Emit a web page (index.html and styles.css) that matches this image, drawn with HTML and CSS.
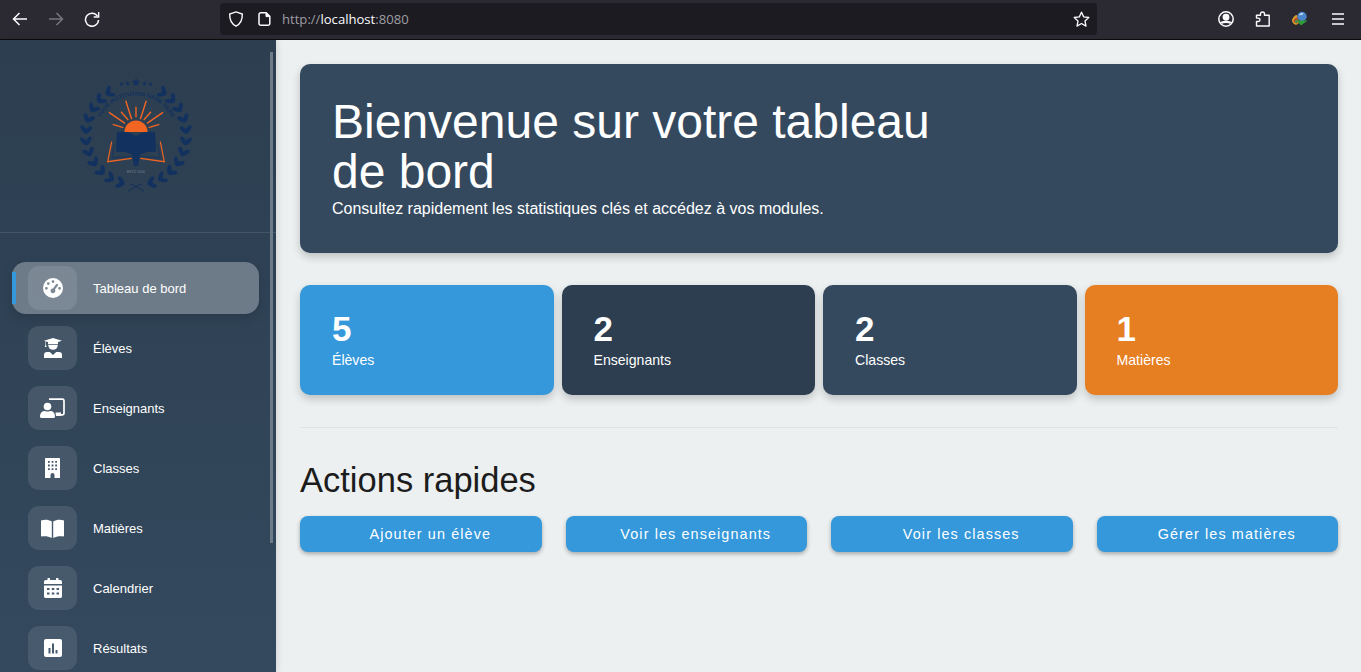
FILE: index.html
```html
<!DOCTYPE html>
<html lang="fr">

<head>
    <meta charset="UTF-8">
    <meta name="viewport" content="width=device-width, initial-scale=1.0">
    <title>Tableau de bord</title>
    <link rel="stylesheet" href="styles.css">
</head>

<body>
    <!-- barre du navigateur -->
    <div class="toolbar">
        <span class="tool">
            <svg width="16" height="16" viewBox="0 0 16 16" fill="none" stroke="currentColor" stroke-width="1.5"><path d="M15 8H1.5M7.500 2l-6 6 6 6"/></svg>
        </span>
        <span class="tool tool-off">
            <svg width="16" height="16" viewBox="0 0 16 16" fill="none" stroke="currentColor" stroke-width="1.5"><path d="M1 8h13.500M8.500 2l6 6-6 6"/></svg>
        </span>
        <span class="tool">
            <svg width="16" height="16" viewBox="0 0 16 16" fill="none" stroke="currentColor" stroke-width="1.5"><path d="M13.500 5.200A6.500 6.500 0 1 0 14.500 9"/><path d="M14.700 1v5h-5" stroke-width="1.300"/></svg>
        </span>
        <div class="urlbar">
            <svg class="url-shield" width="16" height="16" viewBox="0 0 16 16" fill="none" stroke="currentColor" stroke-width="1.400"><path d="M8 .9l6.300 2.100c.2 5.500-1.600 9.800-6.300 12.100C3.300 12.800 1.500 8.500 1.700 3z"/></svg>
            <svg class="url-page" width="14" height="16" viewBox="0 0 14 16" fill="none" stroke="currentColor" stroke-width="1.500"><path d="M2.800 1.800h5.400l3.600 3.600v7a1.800 1.800 0 0 1-1.800 1.800H2.800A1.800 1.800 0 0 1 1 12.400V3.600a1.800 1.800 0 0 1 1.800-1.800z"/><path d="M8 2v3.600h3.600" fill="currentColor" stroke-width="1"/></svg>
            <span class="url-text">http://<b>localhost</b>:8080</span>
            <svg class="url-star" width="17" height="17" viewBox="0 0 17 17" fill="none" stroke="currentColor" stroke-width="1.300"><path d="M8.500 1.200l2.200 4.700 5.100.6-3.800 3.500 1 5.100-4.500-2.600L4 15.100l1-5.100-3.800-3.500 5.100-.6z" stroke-linejoin="round"/></svg>
        </div>
        <span class="tool-right">
            <svg width="16" height="16" viewBox="0 0 16 16" fill="none" stroke="currentColor" stroke-width="1.500"><circle cx="8" cy="8" r="7.200"/><circle cx="8" cy="6.300" r="2.700" fill="currentColor"/><path d="M3.300 12.200c1-1.800 8.400-1.800 9.400 0" stroke-width="2.400"/></svg>
        </span>
        <span class="tool-right">
            <svg width="16" height="16" viewBox="0 0 16 16" fill="none" stroke="currentColor" stroke-width="1.400"><path d="M1.500 15V10.500h1.800a1.700 1.700 0 0 0 0-3.400H1.500V4.300h4V3a2 2 0 0 1 4 0v1.300h4.700V15z" stroke-linejoin="round"/></svg>
        </span>
        <span class="tool-right">
            <svg width="17" height="16" viewBox="0 0 17 16">
                <path d="M1 9c1-3 3-5 5-5l2 8-3 2C3 13 1 12 1 9z" fill="#d9a326"/>
                <path d="M2.500 9.500c1-2 2-3 4-3.500l1 5-2 1.500c-1.500-.3-3-1.500-3-3z" fill="#c8452f"/>
                <path d="M3.800 10c.6-1 1.400-1.500 2.400-1.800l.6 3-1.300 1c-1-.3-1.700-1.200-1.700-2.200z" fill="#3a9a48"/>
                <circle cx="11" cy="5.500" r="4.700" fill="#4a86c8"/>
                <path d="M8 4c1-2 3-2.500 4.500-1.500-.5 1.500-2 2-4.500 1.500z" fill="#b5d2ee"/>
                <path d="M6 9.500h10.500L10 14.500z" fill="#2e9e3a"/>
            </svg>
        </span>
        <span class="tool-right tool-menu">
            <svg width="14" height="14" viewBox="0 0 14 14" stroke="currentColor" stroke-width="1.400"><path d="M1 2h12M1 7h12M1 12h12"/></svg>
        </span>
    </div>

    <div class="app">
        <aside class="sidebar">
            <div class="sidebar-head">
                <svg class="logo" width="120" height="120" viewBox="0 0 120 120">
                    <defs>
                        <g id="leaf" fill="#12315f">
                            <ellipse cx="60" cy="7.500" rx="2.100" ry="4.800" transform="rotate(50 60 7.500)"/>
                            <ellipse cx="60" cy="12" rx="2.100" ry="4.800" transform="rotate(-50 60 12)"/>
                        </g>
                        <path id="arc" d="M20.500 60a39.500 39.500 0 0 1 79 0"/>
                    </defs>
                    <g>
                        <use href="#leaf" transform="rotate(-32 60 60)"/>
                        <use href="#leaf" transform="rotate(-45 60 60)"/>
                        <use href="#leaf" transform="rotate(-58 60 60)"/>
                        <use href="#leaf" transform="rotate(-71 60 60)"/>
                        <use href="#leaf" transform="rotate(-84 60 60)"/>
                        <use href="#leaf" transform="rotate(-97 60 60)"/>
                        <use href="#leaf" transform="rotate(-110 60 60)"/>
                        <use href="#leaf" transform="rotate(-123 60 60)"/>
                        <use href="#leaf" transform="rotate(-136 60 60)"/>
                        <use href="#leaf" transform="rotate(-149 60 60)"/>
                        <use href="#leaf" transform="rotate(-162 60 60)"/>
                        <use href="#leaf" transform="matrix(-1 0 0 1 120 0) rotate(-32 60 60)"/>
                        <use href="#leaf" transform="matrix(-1 0 0 1 120 0) rotate(-45 60 60)"/>
                        <use href="#leaf" transform="matrix(-1 0 0 1 120 0) rotate(-58 60 60)"/>
                        <use href="#leaf" transform="matrix(-1 0 0 1 120 0) rotate(-71 60 60)"/>
                        <use href="#leaf" transform="matrix(-1 0 0 1 120 0) rotate(-84 60 60)"/>
                        <use href="#leaf" transform="matrix(-1 0 0 1 120 0) rotate(-97 60 60)"/>
                        <use href="#leaf" transform="matrix(-1 0 0 1 120 0) rotate(-110 60 60)"/>
                        <use href="#leaf" transform="matrix(-1 0 0 1 120 0) rotate(-123 60 60)"/>
                        <use href="#leaf" transform="matrix(-1 0 0 1 120 0) rotate(-136 60 60)"/>
                        <use href="#leaf" transform="matrix(-1 0 0 1 120 0) rotate(-149 60 60)"/>
                        <use href="#leaf" transform="matrix(-1 0 0 1 120 0) rotate(-162 60 60)"/>
                    </g>
                    <path d="M16 44a46.500 46.500 0 0 0 88 0 46 43.500 0 0 1-88 0z" fill="#12315f"/>
                    <path d="M52 116c4-2 8-5 14-7M68 116c-4-2-8-5-14-7" fill="none" stroke="#12315f" stroke-width="1"/>
                    <g fill="#12315f">
                        <path d="M60 3l1.200 2.700 3 .3-2.200 2 .6 2.900L60 9.400l-2.600 1.500.6-2.900-2.200-2 3-.3z"/>
                        <path d="M51.500 6l.7 1.500 1.700.2-1.300 1.100.4 1.700-1.500-.9-1.500.9.400-1.700-1.300-1.100 1.700-.2zM68.500 6l.7 1.500 1.700.2-1.300 1.100.4 1.700-1.500-.9-1.500.9.400-1.700-1.300-1.100 1.700-.2z"/>
                        <path d="M45.500 7l.6 1.300 1.500.2-1.100 1 .3 1.400-1.300-.7-1.300.7.300-1.400-1.100-1 1.500-.2zM74.500 7l.6 1.300 1.500.2-1.100 1 .3 1.400-1.300-.7-1.300.7.300-1.400-1.100-1 1.500-.2z"/>
                    </g>
                    <text class="logo-text"><textPath href="#arc" startOffset="50%" text-anchor="middle">YOUR INSTITUTION NAME HERE</textPath></text>
                    <g stroke="#f26522" stroke-width="1.400">
                        <path d="M49.700 25.700l6 18.600M70.300 25.700l-6 18.600M60 31.700v10.600M45 36.700l7.300 8.300M75 36.700l-7.300 8.300M33 37.300l16 11M87 37.300l-16 11M36.700 49.300l10.600 3.400M83.300 49.300l-10.600 3.400"/>
                    </g>
                    <path d="M48.500 57a11.500 11.500 0 0 1 23 0z" fill="#f26522"/>
                    <path d="M35.700 66.700l-4 20 24-3.400M84.300 66.700l4 20-24-3.400" fill="none" stroke="#f26522" stroke-width="1.200"/>
                    <path d="M38 71l-2 12 20-2M82 71l2 12-20-2" fill="none" stroke="#12315f" stroke-width=".8"/>
                    <path d="M41 57c7-1 14 0 19 4 5-4 12-5 19-4l1 20c-7-1-14 0-20 5-6-5-13-6-20-5z" fill="#12315f"/>
                    <path d="M56 80h8l-1 6-1.200 5h-3.600L57 86z" fill="#12315f"/>
                    <text class="logo-date" x="60" y="98" text-anchor="middle">ESTD 2000</text>
                </svg>
            </div>
            <nav class="menu">
                <a class="menu-item active" href="#">
                    <span class="menu-icon">
                        <svg width="20" height="20" viewBox="0 0 20 20" fill="currentColor"><path fill-rule="evenodd" d="M10 0a10 10 0 1 1 0 20 10 10 0 0 1 0-20zm0 2.200a1.400 1.400 0 1 0 0 2.800 1.400 1.400 0 0 0 0-2.800zM5.300 4.200a1.400 1.400 0 1 0 0 2.800 1.400 1.400 0 0 0 0-2.800zm9.400 2a1.300 1.300 0 0 0-1.800.2l-2.900 4.100a2.300 2.300 0 1 0 1.900 1.100l2.900-3.900a1.300 1.300 0 0 0-.100-1.500zM3.400 8.900a1.400 1.400 0 1 0 0 2.800 1.400 1.400 0 0 0 0-2.800zm13.200 0a1.400 1.400 0 1 0 0 2.800 1.400 1.400 0 0 0 0-2.800z"/></svg>
                    </span>
                    Tableau de bord
                </a>
                <a class="menu-item" href="#">
                    <span class="menu-icon">
                        <svg width="18" height="20" viewBox="0 0 18 20" fill="currentColor"><path d="M9 0l9 2.700-4 1.300v2.200H4V4L2 3.400v3.200l.6 2.400H.8l.7-2.400V3.200L0 2.700z"/><path d="M4.200 7h9.600a4.800 4.800 0 0 1-9.600 0z"/><path d="M3 14h2.800L9 17l3.200-3H15a3 3 0 0 1 3 3v3H0v-3a3 3 0 0 1 3-3z"/></svg>
                    </span>
                    Élèves
                </a>
                <a class="menu-item" href="#">
                    <span class="menu-icon">
                        <svg width="25" height="20" viewBox="0 0 25 20" fill="currentColor"><circle cx="7.500" cy="8.500" r="3.800"/><path d="M0 18c0-3 2-5 4.500-5h.5c1.600.8 3.400.8 5 0h.5c2.500 0 4.500 2 4.500 5v.5c0 .8-.6 1.500-1.500 1.500h-12C.6 20 0 19.300 0 18.500z"/><path d="M9 1.200h13.500c1 0 1.500.5 1.500 1.500v12.600c0 1-.5 1.500-1.500 1.500H21" fill="none" stroke="currentColor" stroke-width="1.700"/><path d="M15.500 14.500h5.500V18h-5z"/></svg>
                    </span>
                    Enseignants
                </a>
                <a class="menu-item" href="#">
                    <span class="menu-icon">
                        <svg width="15" height="20" viewBox="0 0 15 20" fill="currentColor"><path fill-rule="evenodd" d="M.8 0h13.400c.4 0 .8.4.8.8V20H9.500v-3a2 2 0 0 0-4 0v3H0V.8C0 .4.400 0 .8 0zM3 3v1.800h1.800V3zm3.600 0v1.800h1.800V3zm3.600 0v1.800H12V3zM3 6.600v1.800h1.800V6.600zm3.600 0v1.800h1.800V6.600zm3.600 0v1.800H12V6.600zM3 10.200V12h1.800v-1.800zm3.600 0V12h1.800v-1.800zm3.600 0V12H12v-1.800z"/></svg>
                    </span>
                    Classes
                </a>
                <a class="menu-item" href="#">
                    <span class="menu-icon">
                        <svg width="23" height="19" viewBox="0 0 23 19" fill="currentColor"><path d="M0 1.500C3.500.3 7.500.5 10.800 2.500V19C7.500 17.300 3.500 17 .8 17.600c-.5 0-.8-.3-.8-.8z"/><path d="M23 1.500C19.500.3 15.500.5 12.200 2.500V19c3.300-1.700 7.300-2 10-1.400.5 0 .8-.3.8-.8z"/></svg>
                    </span>
                    Matières
                </a>
                <a class="menu-item" href="#">
                    <span class="menu-icon">
                        <svg width="18" height="20" viewBox="0 0 18 20" fill="currentColor"><path fill-rule="evenodd" d="M4 0h1.500c.3 0 .5.200.5.500V2h6V.5c0-.3.200-.5.500-.5H14c.3 0 .5.200.5.500V2h1.800C17.200 2 18 2.800 18 3.800V6H0V3.800C0 2.800.800 2 1.800 2h1.700V.5c0-.3.200-.5.500-.5zM0 7.500h18v10.700c0 1-.8 1.800-1.800 1.800H1.800C.8 20 0 19.200 0 18.200zM3 10v2h2.500v-2zm4.800 0v2h2.500v-2zm4.700 0v2H15v-2zM3 14.500v2h2.500v-2zm4.800 0v2h2.500v-2zm4.700 0v2H15v-2z"/></svg>
                    </span>
                    Calendrier
                </a>
                <a class="menu-item" href="#">
                    <span class="menu-icon">
                        <svg width="18" height="18" viewBox="0 0 18 18" fill="currentColor"><path fill-rule="evenodd" d="M2 0h14a2 2 0 0 1 2 2v14a2 2 0 0 1-2 2H2a2 2 0 0 1-2-2V2a2 2 0 0 1 2-2zm2.500 9v5.500h2V9zm3.500-4.500v10h2v-10zM11.500 11v3.500h2V11z"/></svg>
                    </span>
                    Résultats
                </a>
            </nav>
            <div class="sidebar-scroll"></div>
        </aside>

        <main class="content">
            <section class="banner">
                <h1>Bienvenue sur votre tableau de bord</h1>
                <p>Consultez rapidement les statistiques clés et accédez à vos modules.</p>
            </section>

            <section class="stats">
                <div class="stat stat-blue">
                    <strong>5</strong>
                    <span>Élèves</span>
                </div>
                <div class="stat stat-dark">
                    <strong>2</strong>
                    <span>Enseignants</span>
                </div>
                <div class="stat stat-slate">
                    <strong>2</strong>
                    <span>Classes</span>
                </div>
                <div class="stat stat-orange">
                    <strong>1</strong>
                    <span>Matières</span>
                </div>
            </section>

            <hr class="divider">

            <h2 class="section-title">Actions rapides</h2>
            <div class="actions">
                <a class="action" href="#">Ajouter un élève</a>
                <a class="action" href="#">Voir les enseignants</a>
                <a class="action" href="#">Voir les classes</a>
                <a class="action" href="#">Gérer les matières</a>
            </div>
        </main>
    </div>
</body>

</html>
```

FILE: styles.css
```css
* {
    box-sizing: border-box;
}

body {
    font-family: "Liberation Sans", Arial, sans-serif;
    background-color: #ecf0f1;
    margin: 0;
    height: 100vh;
    overflow: hidden;
    display: flex;
    flex-direction: column;
}

/* barre du navigateur */
.toolbar {
    height: 40px;
    flex-shrink: 0;
    display: flex;
    align-items: center;
    padding: 0 5px 1px 2px;
    background-color: #2b2a33;
    border-bottom: 1px solid #0c0c0d;
    color: #fbfbfe;
}

.tool {
    width: 36px;
    display: flex;
    justify-content: center;
}

.tool-off {
    color: #77767c;
}

.tool-right {
    width: 37px;
    display: flex;
    justify-content: center;
}

.tool-menu {
    width: 38px;
    padding-left: 1px;
}

.urlbar {
    flex: 1;
    height: 32px;
    margin: 0 110px;
    padding: 0 7px 0 8px;
    display: flex;
    align-items: center;
    background-color: #1c1b22;
    border-radius: 4px;
}

.url-page {
    margin-left: 14px;
}

.url-text {
    margin-left: 10px;
    font-family: "Open Sans", sans-serif;
    font-size: 13.100px;
    color: #9f9ea3;
}

.url-text b {
    font-weight: 400;
    color: #fbfbfe;
}

.url-star {
    margin-left: auto;
}

.app {
    flex: 1;
    min-height: 0;
    display: flex;
}

/* menu lateral */
.sidebar {
    position: relative;
    width: 276px;
    flex-shrink: 0;
    overflow: hidden;
    background: linear-gradient(180deg, #2c3e50, #34495e);
    box-shadow: 2px 0 6px rgba(0, 0, 0, 0.1);
    color: #ffffff;
}

.sidebar-head {
    height: 193px;
    display: flex;
    justify-content: center;
    padding: 35px 4px 0 0;
    border-bottom: 1px solid rgba(255, 255, 255, 0.1);
}

.logo {
    display: block;
}

.logo-text {
    font-size: 5.600px;
    font-weight: 700;
    fill: #12315f;
}

.logo-date {
    font-size: 3.500px;
    fill: #6f8096;
}

.menu {
    display: flex;
    flex-direction: column;
    gap: 8px;
    padding: 29px 17px 0 12px;
}

.menu-item {
    position: relative;
    flex-shrink: 0;
    height: 52px;
    display: flex;
    align-items: center;
    gap: 16px;
    padding-left: 16px;
    border-radius: 14px;
    color: #ffffff;
    text-decoration: none;
    font-size: 13px;
}

.menu-item.active {
    background-color: rgba(255, 255, 255, 0.3);
    box-shadow: 0 4px 12px rgba(0, 0, 0, 0.15);
}

.menu-item.active::before {
    content: "";
    position: absolute;
    left: 0;
    top: 10px;
    bottom: 10px;
    width: 4px;
    background-color: #3498db;
}

.menu-icon {
    width: 49px;
    height: 44px;
    display: flex;
    align-items: center;
    justify-content: center;
    border-radius: 11px;
    background-color: rgba(255, 255, 255, 0.1);
}

.sidebar-scroll {
    position: absolute;
    left: 270px;
    top: 12px;
    width: 3px;
    height: 491px;
    background-color: #6d7a87;
}

/* contenu */
.content {
    flex: 1;
    min-width: 0;
    padding: 24px 23px 24px 24px;
    color: #1c1c1c;
}

.banner {
    padding: 33px 32px 35px;
    border-radius: 10px;
    background-color: #34495e;
    box-shadow: 0 4px 8px rgba(0, 0, 0, 0.2);
    color: #ffffff;
}

.banner h1 {
    max-width: 640px;
    margin: 0;
    font-size: 48px;
    font-weight: 400;
    line-height: 50px;
}

.banner p {
    margin: 3px 0 0;
    font-size: 16px;
    line-height: 18px;
}

.stats {
    display: grid;
    grid-template-columns: repeat(4, 1fr);
    gap: 8px;
    margin-top: 32px;
}

.stat {
    height: 110px;
    padding: 24px 32px;
    display: flex;
    flex-direction: column;
    border-radius: 10px;
    box-shadow: 0 4px 8px rgba(0, 0, 0, 0.2);
    color: #ffffff;
}

.stat strong {
    font-size: 35px;
    line-height: 40px;
}

.stat span {
    font-size: 14.100px;
    line-height: 22px;
}

.stat-blue {
    background-color: #3498db;
}

.stat-dark {
    background-color: #2c3e50;
}

.stat-slate {
    background-color: #34495e;
}

.stat-orange {
    background-color: #e67e22;
}

.divider {
    margin: 32px 0 0;
    border: 0;
    border-top: 1px solid #dfe4e6;
}

.section-title {
    margin: 33px 0 17px;
    font-size: 34.500px;
    font-weight: 400;
    line-height: 38px;
}

.actions {
    display: grid;
    grid-template-columns: repeat(4, 1fr);
    gap: 24px;
}

.action {
    height: 36px;
    display: flex;
    align-items: center;
    justify-content: center;
    padding-left: 19px;
    border-radius: 8px;
    background-color: #3498db;
    box-shadow: 0 2px 4px rgba(0, 0, 0, 0.3);
    color: #ffffff;
    text-decoration: none;
    font-size: 14.400px;
    letter-spacing: 1.100px;
}
```
